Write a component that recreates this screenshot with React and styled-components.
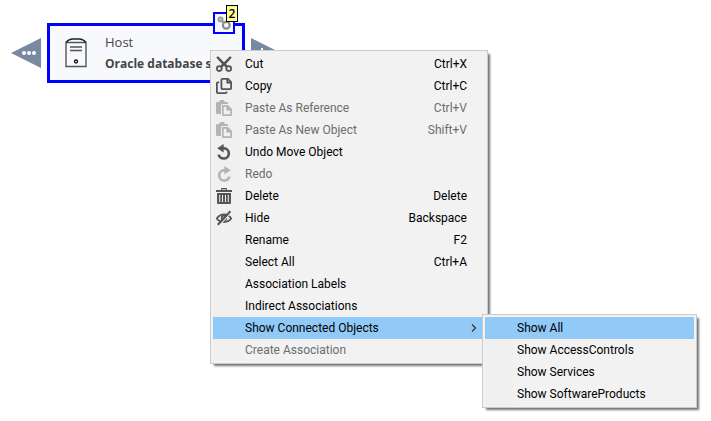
import React from "react";
import styled, { createGlobalStyle, css } from "styled-components";

const GlobalStyle = createGlobalStyle`
  * {
    box-sizing: border-box;
  }

  body {
    margin: 0;
    background-color: #fff;
    font-family: Roboto, "Open Sans", sans-serif;
    font-size: 12px;
  }
`;

const Canvas = styled.main`
  position: relative;
  min-height: 100vh;
  padding: 23px 11px;
  overflow: hidden;
`;

const NodeRow = styled.div`
  display: flex;
  align-items: center;
  gap: 6px;
`;

const ExpandButton = styled.button`
  display: flex;
  padding: 0;
  border: 0;
  background: none;
  cursor: pointer;
`;

const Node = styled.article`
  position: relative;
  display: flex;
  align-items: center;
  gap: 18px;
  width: 198px;
  padding: 6px 15px;
  background-color: #f7f9fc;
  border: 3px solid #0000ff;
  font-family: "Open Sans", "Noto Sans", sans-serif;
`;

const NodeText = styled.div`
  color: #444;
  line-height: 21px;
  white-space: nowrap;
`;

const NodeType = styled.p`
  margin: 0;
  font-size: 13px;
`;

const NodeName = styled.h1`
  margin: 0;
  font-size: 12px;
  font-weight: 700;
`;

const LinkBadge = styled.div`
  position: absolute;
  top: -14px;
  right: 7px;
  display: flex;
  align-items: center;
  justify-content: center;
  width: 22px;
  height: 22px;
  background-color: #f7f9fc;
  border: 2px solid #0000ff;
`;

const LinkCount = styled.span`
  position: absolute;
  top: -9px;
  right: -5px;
  width: 12px;
  height: 17px;
  background-color: #ffff99;
  border: 1px solid #000;
  color: #000;
  font-size: 12px;
  font-weight: 600;
  line-height: 15px;
  text-align: center;
`;

const MenuList = styled.ul`
  position: absolute;
  z-index: 1;
  margin: 0;
  padding: 2px;
  list-style: none;
  background-color: #f2f2f2;
  border: 1px solid #ccc;
  box-shadow: 3px 3px 2px -1px rgba(0, 0, 0, 0.55);

  ${(props) =>
    props.$nested
      ? css`
          top: -3px;
          left: 100%;
          min-width: 215px;
          margin-left: -3px;
        `
      : css`
          top: 50px;
          left: 210px;
          min-width: 278px;
        `};
`;

const MenuItem = styled.li`
  position: relative;
`;

const MenuButton = styled.button`
  display: flex;
  align-items: center;
  width: 100%;
  height: 22px;
  padding: 0 8px 0 0;
  border: 0;
  background: linear-gradient(to right, #f0f0f0 28px, #f2f2f2 28px);
  color: #000;
  font: inherit;
  white-space: nowrap;
  text-align: left;

  &:disabled {
    color: #6d6d6d;
  }

  ${(props) =>
    props.$active &&
    css`
      background: #91c9f7;
    `};
`;

const IconSlot = styled.span`
  display: flex;
  flex: none;
  width: 32px;
  padding-left: 3px;
  color: ${(props) => (props.$disabled ? "#b4b4b4" : "#555")};
`;

const Shortcut = styled.kbd`
  margin-left: auto;
  padding-right: 10px;
  font: inherit;
`;

const Chevron = styled.svg`
  margin-left: auto;
`;

const icons = {
  cut: (
    <g fill="none" stroke="currentColor">
      <path
        d="M0.4 1.8Q0.8 0.3 2.4 0.6L8 6.3L13.6 0.6Q15.2 0.3 15.6 1.8L10 8L12.4 10.4L10.2 11.8L8 9.8L5.8 11.8L3.6 10.4L6 8Z"
        fill="currentColor"
        stroke="none"
      />
      <circle cx="3.3" cy="12.6" r="2.4" strokeWidth="1.8" />
      <circle cx="12.7" cy="12.6" r="2.4" strokeWidth="1.8" />
    </g>
  ),
  copy: (
    <g fill="none" stroke="currentColor" strokeWidth="1.8">
      <path d="M6.5 0.9H12L15.1 4V10.3Q15.1 11.1 14.3 11.1H6.2Q5.4 11.1 5.4 10.3V1.8Q5.4 0.9 6.5 0.9Z" />
      <path d="M11.3 1V4.5H15" />
      <path d="M3.2 4.4H1.8Q0.9 4.4 0.9 5.3V14.2Q0.9 15.1 1.8 15.1H9.6Q10.5 15.1 10.5 14.2V13.4" />
    </g>
  ),
  paste: (
    <g fill="currentColor">
      <path d="M0 3Q0 2 1 2H3.5V1Q3.5 0 4.5 0H7.5Q8.5 0 8.5 1V2H11Q12 2 12 3V4H6.5Q5 4 5 5.5V14H1Q0 14 0 13Z" />
      <path
        fillRule="evenodd"
        d="M7 5H12L16 9V15Q16 16 15 16H7Q6 16 6 15V6Q6 5 7 5ZM7.7 6.7V14.3H14.3V10.6H10.4V6.7Z"
      />
    </g>
  ),
  undo: (
    <g fill="none" stroke="currentColor">
      <path d="M6 4.2H8.4A5.2 5.2 0 1 1 2.6 10.6" strokeWidth="2.6" />
      <path d="M7.6 0V8.6L1.2 4.3Z" fill="currentColor" stroke="none" />
    </g>
  ),
  trash: (
    <g fill="currentColor">
      <path
        fillRule="evenodd"
        d="M5 2V1Q5 0 6 0H10Q11 0 11 1V2H16V4H0V2ZM6.2 1.2V2H9.8V1.2Z"
      />
      <path
        fillRule="evenodd"
        d="M1 5H15V14.8Q15 16 13.8 16H2.2Q1 16 1 14.8ZM3.2 7V14H4.2V7ZM6 7V14H7V7ZM9 7V14H10V7ZM11.8 7V14H12.8V7Z"
      />
    </g>
  ),
  hide: (
    <g fill="none" stroke="currentColor">
      <path
        d="M0.8 8.5Q3.5 4.4 8 4.4Q12.5 4.4 15.2 8.5Q12.5 12 8 12Q3.5 12 0.8 8.5Z"
        strokeWidth="1.8"
      />
      <circle cx="8" cy="8" r="2.3" strokeWidth="1.8" />
      <path d="M3.2 15.8L15.4 2.2" stroke="#f0f0f0" strokeWidth="1.2" />
      <path d="M1.8 14.8L14.4 1.2" strokeWidth="2" />
    </g>
  ),
};

icons.redo = <g transform="translate(16 0) scale(-1 1)">{icons.undo}</g>;

const menuItems = [
  { label: "Cut", shortcut: "Ctrl+X", icon: "cut" },
  { label: "Copy", shortcut: "Ctrl+C", icon: "copy" },
  {
    label: "Paste As Reference",
    shortcut: "Ctrl+V",
    icon: "paste",
    disabled: true,
  },
  {
    label: "Paste As New Object",
    shortcut: "Shift+V",
    icon: "paste",
    disabled: true,
  },
  { label: "Undo Move Object", icon: "undo" },
  { label: "Redo", icon: "redo", disabled: true },
  { label: "Delete", shortcut: "Delete", icon: "trash" },
  { label: "Hide", shortcut: "Backspace", icon: "hide" },
  { label: "Rename", shortcut: "F2" },
  { label: "Select All", shortcut: "Ctrl+A" },
  { label: "Association Labels" },
  { label: "Indirect Associations" },
  {
    label: "Show Connected Objects",
    active: true,
    children: [
      { label: "Show All", active: true },
      { label: "Show AccessControls" },
      { label: "Show Services" },
      { label: "Show SoftwareProducts" },
    ],
  },
  { label: "Create Association", disabled: true },
];

const Menu = ({ items, label, nested }) => (
  <MenuList role="menu" aria-label={label} $nested={nested}>
    {items.map((item) => (
      <MenuItem role="none" key={item.label}>
        <MenuButton
          type="button"
          role="menuitem"
          disabled={item.disabled}
          aria-haspopup={item.children ? "menu" : undefined}
          aria-expanded={item.children ? true : undefined}
          $active={item.active}
        >
          <IconSlot $disabled={item.disabled}>
            {item.icon && (
              <svg width="16" height="16" viewBox="0 0 16 16" aria-hidden="true">
                {icons[item.icon]}
              </svg>
            )}
          </IconSlot>
          <span>{item.label}</span>
          {item.shortcut && <Shortcut>{item.shortcut}</Shortcut>}
          {item.children && (
            <Chevron width="6" height="8" viewBox="0 0 6 8" aria-hidden="true">
              <path d="M1 0.5L4.5 4L1 7.5" fill="none" stroke="#333" strokeWidth="1.2" />
            </Chevron>
          )}
        </MenuButton>
        {item.children && (
          <Menu items={item.children} label={item.label} nested />
        )}
      </MenuItem>
    ))}
  </MenuList>
);

const Expand = ({ label, right }) => (
  <ExpandButton type="button" aria-label={label}>
    <svg width="30" height="30" viewBox="0 0 30 30">
      <path d={right ? "M0 0L30 15L0 30Z" : "M30 0L0 15L30 30Z"} fill="#7a89a3" />
      {right ? (
        <path d="M11 10V20M6 15H16" stroke="#fff" strokeWidth="2" />
      ) : (
        <g fill="#fff">
          <circle cx="13" cy="15" r="2" />
          <circle cx="18" cy="15" r="2" />
          <circle cx="23" cy="15" r="2" />
        </g>
      )}
    </svg>
  </ExpandButton>
);

const ServerIcon = () => (
  <svg width="22" height="30" viewBox="0 0 22 30" fill="none" aria-hidden="true">
    <path d="M1 4.5H21V28.5H1Z" stroke="#555" strokeWidth="1.4" />
    <path d="M1 4.5Q4 1 7.5 1H14.5Q18 1 21 4.5" stroke="#222" strokeWidth="1.3" />
    <path d="M5 9H17M5 12.5H17" stroke="#555" strokeWidth="1.5" />
    <circle cx="11" cy="23.5" r="1.5" stroke="#111" strokeWidth="1.3" />
  </svg>
);

const LinkIcon = () => (
  <svg width="16" height="16" viewBox="0 0 16 16" fill="none" aria-hidden="true">
    <path d="M4.5 4.5L10 10L13 4" stroke="#999" strokeWidth="2" />
    <circle cx="4.5" cy="4.5" r="2.2" stroke="#999" strokeWidth="1.6" fill="#bbb" />
    <circle cx="10.3" cy="10.3" r="3.4" stroke="#8c8c8c" strokeWidth="2.2" fill="#f7f9fc" />
  </svg>
);

const App = () => (
  <>
    <GlobalStyle />
    <Canvas>
      <NodeRow>
        <Expand label="Expand left" />
        <Node>
          <ServerIcon />
          <NodeText>
            <NodeType>Host</NodeType>
            <NodeName>Oracle database s</NodeName>
          </NodeText>
          <LinkBadge>
            <LinkIcon />
            <LinkCount>2</LinkCount>
          </LinkBadge>
        </Node>
        <Expand label="Expand right" right />
      </NodeRow>
      <Menu items={menuItems} label="Object actions" />
    </Canvas>
  </>
);

export default App;
